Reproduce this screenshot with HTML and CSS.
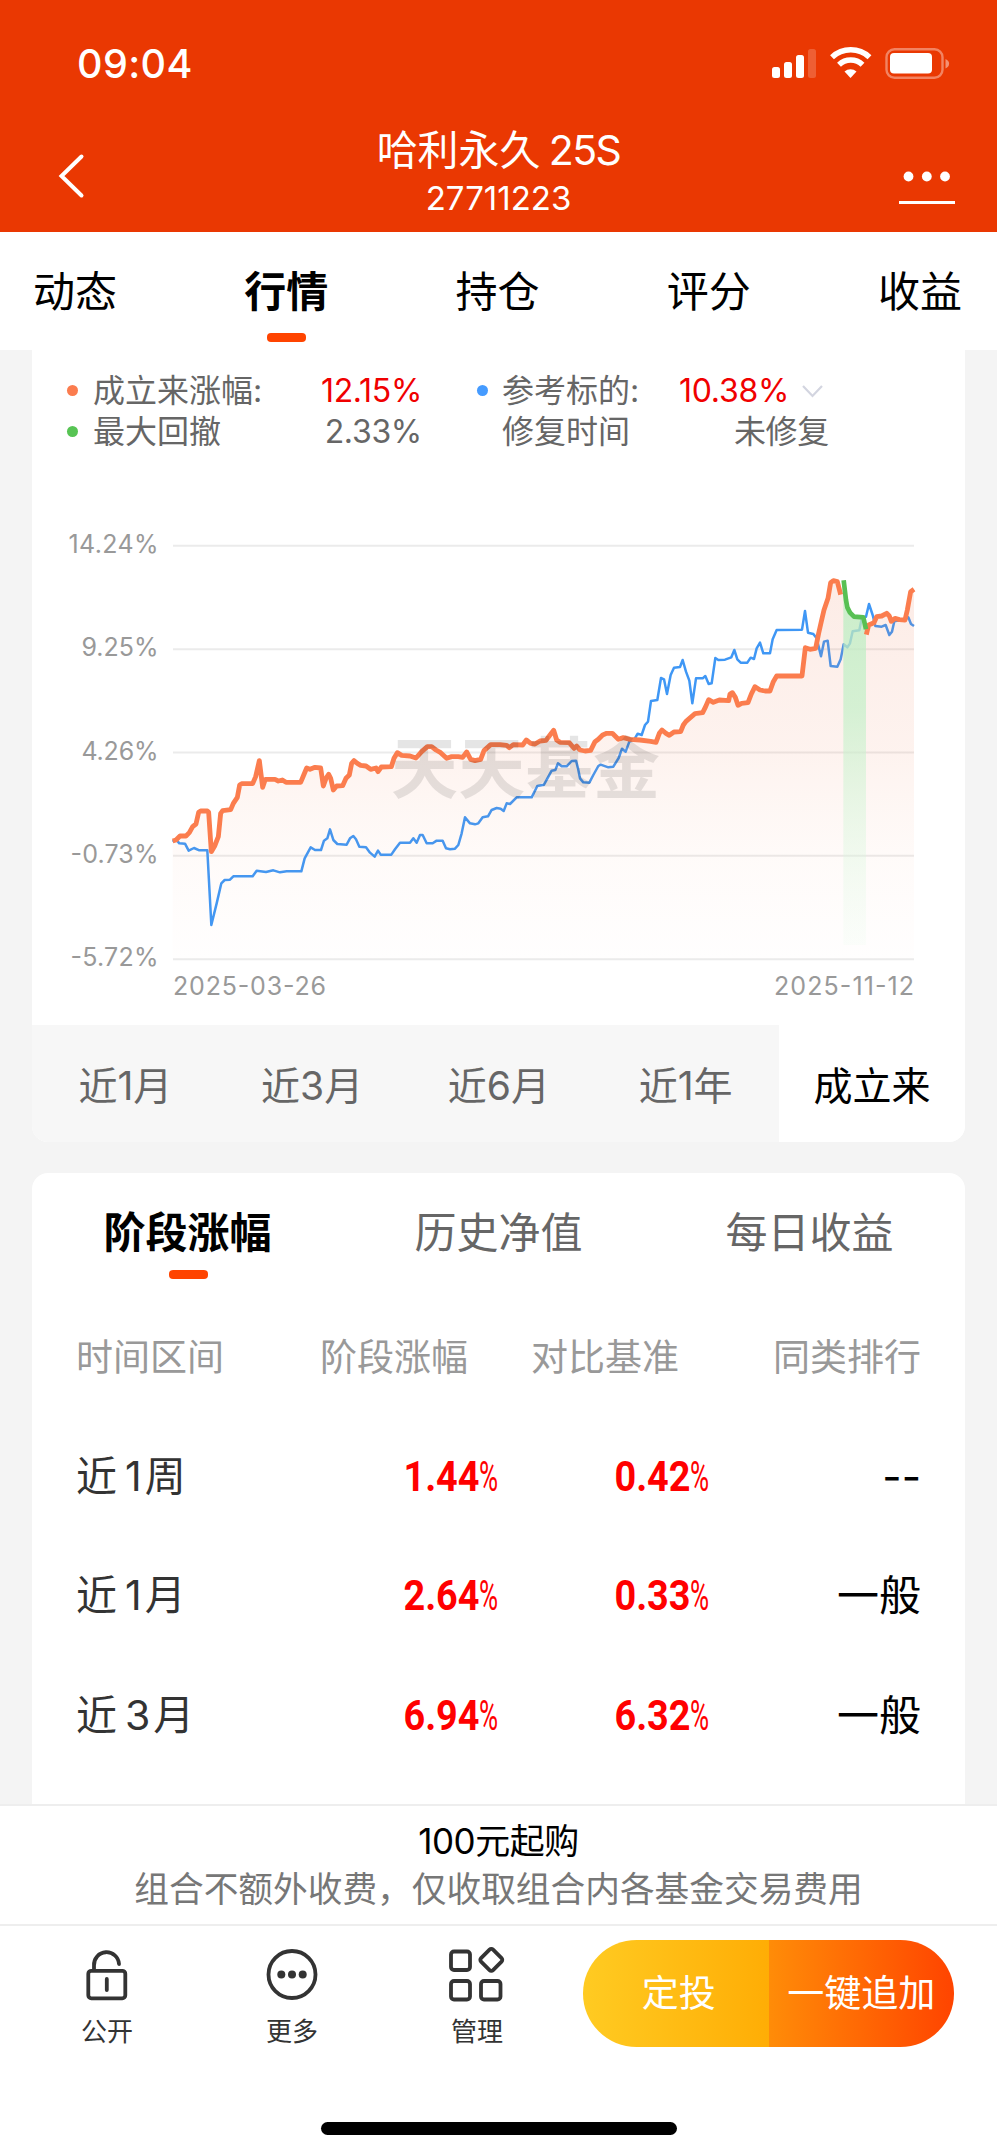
FILE: index.html
```html
<!DOCTYPE html>
<html lang="zh-CN">
<head>
<meta charset="utf-8">
<title>哈利永久 25S</title>
<link rel="stylesheet" href="styles.css">
</head>
<body>
<header class="head">
  <div class="status">
    <span class="clock">09:04</span>
    <svg class="sys" width="180" height="34" viewBox="0 0 180 34">
      <g fill="#fff"><rect x="2" y="21" width="8" height="11" rx="2.500"/><rect x="14" y="16" width="8" height="16" rx="2.500"/><rect x="26" y="9" width="8" height="23" rx="2.500"/><rect x="38" y="3" width="8" height="29" rx="2.500" opacity=".2"/></g>
      <g fill="none" stroke="#fff" stroke-width="5.600"><path d="M62 11.200a27.500 27.500 0 0 1 37.500 0"/><path d="M69 18.700a17 17 0 0 1 23.500 0"/></g>
      <path d="M80.500 32l-6-6.500a9 9 0 0 1 12 0z" fill="#fff"/>
      <rect x="116.500" y="3.200" width="56" height="28.500" rx="8" fill="none" stroke="#fff" stroke-opacity=".38" stroke-width="2.400"/>
      <rect x="120" y="7" width="42" height="20.500" rx="4" fill="#fff"/>
      <path d="M175.500 13v9.500q3.600-1.500 3.600-4.700t-3.600-4.800z" fill="#fff" opacity=".45"/>
    </svg>
  </div>
  <div class="nav">
    <svg class="back" width="30" height="50" viewBox="0 0 30 50"><path d="M25.500 5.500L5.500 25L25.500 44.500" fill="none" stroke="#fff" stroke-width="4" stroke-linecap="round"/></svg>
    <div class="titles"><div class="title">哈利永久<span>25S</span></div><div class="code">27711223</div></div>
    <svg class="dots" width="58" height="40" viewBox="0 0 58 40"><g fill="#fff"><circle cx="11.500" cy="8.500" r="4.900"/><circle cx="29.800" cy="8.500" r="4.900"/><circle cx="48" cy="8.500" r="4.900"/><rect x="2" y="33" width="56" height="3"/></g></svg>
  </div>
</header>
<nav class="tabs"><span>动态</span><span class="on">行情</span><span>持仓</span><span>评分</span><span>收益</span></nav>
<main class="body">
  <section class="card chartcard">
    <div class="legend">
      <i class="dot o"></i><span>成立来涨幅:</span><b class="red">12.15%</b>
      <i class="dot b"></i><span>参考标的:</span><b class="red pick">10.38%<svg width="23" height="14" viewBox="0 0 23 14"><path d="M2 2l9.500 10L21 2" fill="none" stroke="#d3d5e0" stroke-width="2.200"/></svg></b>
      <i class="dot g"></i><span>最大回撤</span><b>2.33%</b>
      <i></i><span>修复时间</span><b>未修复</b>
    </div>
    <svg class="chart" width="933" height="505" viewBox="32 520 933 505">
      <defs>
        <linearGradient id="fo" gradientUnits="userSpaceOnUse" x1="0" y1="60" x2="0" y2="1200"><stop offset="0" stop-color="#e8693f" stop-opacity=".13"/><stop offset=".45" stop-color="#f07548" stop-opacity=".09"/><stop offset=".75" stop-color="#f58a5c" stop-opacity=".035"/><stop offset="1" stop-color="#fa9a80" stop-opacity=".01"/></linearGradient>
        <linearGradient id="fg" gradientUnits="userSpaceOnUse" x1="0" y1="60" x2="0" y2="1155"><stop offset="0" stop-color="#b9edc0" stop-opacity=".75"/><stop offset=".35" stop-color="#c3f0c8" stop-opacity=".7"/><stop offset="1" stop-color="#e4fbe8" stop-opacity=".15"/></linearGradient>
      </defs>
      <g stroke="#ebebeb" stroke-width="2"><path d="M173 545.800H914M173 649.200H914M173 752.600H914M173 855.800H914M173 959.300H914"/></g>
      <g transform="translate(150 560) scale(.33333)" fill="none" stroke-linejoin="round">
        <path stroke="#3f97f5" stroke-width="7.500" d="M68,845L78,838 88,850 105,851 116,872 132,864 148,871 172,871 184,1095 200,1030 214,970 224,960 240,959 250,949 308,949 320,932 348,936 370,931 390,937 410,934 454,934 464,895 482,862 495,870 513,870 522,842 532,835 540,808 550,840 562,852 590,854 600,835 610,828 618,838 628,860 648,862 660,878 674,890 684,872 692,884 724,884 735,868 750,848 780,848 790,835 800,848 810,825 818,825 830,850 848,850 860,842 878,842 888,865 900,868 915,866 925,855 935,820 945,772 960,790 975,793 985,790 998,772 1014,769 1025,750 1040,744 1052,746 1061,753 1070,730 1080,732 1100,712 1145,712 1162,678 1182,674 1205,632 1216,630 1224,610 1235,619 1250,619 1265,603 1278,602 1284,625 1290,655 1300,667 1318,668 1330,645 1345,618 1352,614 1375,622 1390,620 1406,594 1416,566 1427,575 1438,545 1452,540 1463,521 1475,525 1485,495 1494,485 1503,423 1522,420 1533,354 1542,358 1551,402 1562,345 1572,323 1590,321 1598,300 1608,335 1618,362 1627,430 1638,355 1658,355 1666,348 1676,372 1685,370 1696,294 1705,300 1725,299 1744,292 1753,270 1762,298 1772,308 1792,308 1802,293 1812,297 1820,265 1830,248 1840,280 1860,280 1868,238 1880,210 1956,209 1965,153 1974,218 1990,222 2000,235 2013,289 2022,245 2033,242 2042,318 2062,320 2072,298 2081,253 2092,262 2100,250 2108,214 2128,211 2136,172 2148,170 2157,132 2168,165 2176,198 2195,200 2207,195 2218,225 2226,215 2233,184 2265,178 2275,172 2283,192 2292,198"/>
        <path fill="url(#fo)" d="M68,1198V843L78,840 90,828 108,828 118,818 128,800 138,792 146,757 152,753 172,753 176,757 184,875 194,858 205,830 212,760 218,752 242,749 250,730 262,712 269,675 275,671 308,671 317,650 328,602 338,682 346,658 375,658 408,667 452,667 470,624 512,624 520,678 536,643 550,690 578,677 598,645 612,602 632,616 662,628 684,635 694,621 724,620 742,578 798,594 832,560 890,594 938,592 950,576 962,598 992,598 1022,554 1118,555 1188,541 1211,511 1220,540 1258,548 1290,570 1322,571 1345,538 1370,520 1387,520 1405,538 1518,547 1536,510 1558,526 1592,515 1608,484 1658,458 1676,419 1736,422 1747,398 1764,436 1794,428 1815,380 1860,393 1880,348 1956,348 1966,263 1997,265 2015,180 2034,115 2042,68 2062,65 2072,102 2080,62 2092,142 2112,170 2140,172 2150,222 2156,195 2180,170 2210,160 2224,184 2265,180 2282,95 2292,88V1198z"/>
        <path fill="url(#fg)" d="M2080,1155V62L2088,120 2092,142 2100,158 2112,170 2140,172 2148,222V1155z"/>
        <path stroke="#fb7d4e" stroke-width="14.500" d="M68,843L78,840 90,828 108,828 118,818 128,800 138,792 146,757 152,753 172,753 176,757 184,875 194,858 205,830 212,760 218,752 242,749 250,730 262,712 269,675 275,671 308,671 317,650 328,602 338,682 346,658 375,658 385,663 397,660 408,667 452,667 460,648 470,624 480,628 495,622 512,624 520,678 528,655 536,643 542,655 550,690 560,678 578,677 588,655 598,645 605,610 612,602 622,610 632,616 648,618 662,628 678,624 684,635 694,621 724,620 732,595 742,578 755,586 780,588 798,594 815,575 832,560 845,560 858,570 872,578 890,595 905,590 925,590 938,592 950,576 962,598 975,602 992,598 1002,572 1012,563 1022,554 1050,554 1070,556 1078,563 1090,554 1118,555 1129,540 1142,550 1155,552 1170,543 1188,541 1200,525 1211,511 1220,540 1230,547 1258,548 1272,565 1280,558 1290,570 1305,573 1322,571 1335,545 1345,538 1358,525 1370,520 1387,520 1405,538 1420,533 1440,538 1470,540 1502,544 1518,547 1528,520 1536,510 1548,520 1558,526 1572,516 1592,515 1600,495 1608,484 1635,461 1658,458 1667,440 1676,419 1690,427 1708,420 1736,422 1740,402 1747,398 1756,412 1764,436 1775,430 1794,428 1804,402 1815,380 1830,390 1845,393 1860,393 1870,365 1880,348 1956,348 1966,263 1980,268 1997,265 2006,220 2015,180 2022,150 2034,115 2042,68 2050,62 2062,65 2072,104M2149,224L2156,195 2172,188 2180,170 2195,168 2210,160 2218,168 2224,184 2235,175 2248,179 2265,180 2272,150 2282,95 2292,88"/>
        <path stroke="#58c053" stroke-width="14" d="M2081,61L2088,120 2092,142 2100,158 2112,170 2140,172 2148,208"/>
      </g>
      <text class="mark" x="391" y="793" textLength="269">天天基金</text>
      <g class="axis" text-anchor="end"><text x="158.500" y="552.500" textLength="90">14.24%</text><text x="158.500" y="656" textLength="77">9.25%</text><text x="158.500" y="759.500" textLength="77">4.26%</text><text x="158.500" y="862.500" textLength="88">-0.73%</text><text x="158.500" y="966" textLength="88">-5.72%</text><text x="914" y="994.500" textLength="140">2025-11-12</text></g>
      <text class="axis" x="173" y="994.500" textLength="153">2025-03-26</text>
    </svg>
    <div class="range"><span>近1月</span><span>近3月</span><span>近6月</span><span>近1年</span><span class="on">成立来</span></div>
  </section>
  <section class="card tablecard">
    <div class="subtabs"><span class="on">阶段涨幅</span><span>历史净值</span><span>每日收益</span></div>
    <div class="row th"><span>时间区间</span><span>阶段涨幅</span><span>对比基准</span><span>同类排行</span></div>
    <div class="row"><span>近<em>1</em>周</span><span class="val"><b>1.44</b><i>%</i></span><span class="val"><b>0.42</b><i>%</i></span><span class="rank">--</span></div>
    <div class="row"><span>近<em>1</em>月</span><span class="val"><b>2.64</b><i>%</i></span><span class="val"><b>0.33</b><i>%</i></span><span class="rank">一般</span></div>
    <div class="row"><span>近<em>3</em>月</span><span class="val"><b>6.94</b><i>%</i></span><span class="val"><b>6.32</b><i>%</i></span><span class="rank">一般</span></div>
  </section>
</main>
<section class="notice"><div class="min">100元起购</div><div class="fee">组合不额外收费，仅收取组合内各基金交易费用</div></section>
<footer class="foot">
  <div class="actions">
    <div class="act"><svg width="60" height="60" viewBox="0 0 60 60"><g fill="none" stroke="#333" stroke-width="3.800" stroke-linecap="round"><rect x="11.300" y="25.800" width="37" height="27.500" rx="3"/><path d="M17 25V20.500a12.500 12.500 0 0 1 25-1.500M29.800 34v11"/></g></svg><span>公开</span></div>
    <div class="act"><svg width="60" height="60" viewBox="0 0 60 60"><circle cx="30" cy="29.500" r="23.500" fill="none" stroke="#333" stroke-width="3.800"/><g fill="#333"><circle cx="19.300" cy="29.500" r="4"/><circle cx="30" cy="29.500" r="4"/><circle cx="40.700" cy="29.500" r="4"/></g></svg><span>更多</span></div>
    <div class="act"><svg width="60" height="60" viewBox="0 0 60 60"><g fill="none" stroke="#333" stroke-width="3.800"><rect x="4" y="6.500" width="19" height="18.500" rx="3"/><rect x="4" y="36" width="19" height="18.500" rx="3"/><rect x="34" y="36" width="19.500" height="18.500" rx="3"/><rect x="35.800" y="6.300" width="17" height="17" rx="2.500" transform="rotate(45 44.300 14.800)"/></g></svg><span>管理</span></div>
  </div>
  <div class="cta"><span class="plan">定投</span><span class="add">一键追加</span></div>
</footer>
<div class="home"><i></i></div>
</body>
</html>
```
FILE: styles.css
```css
* { box-sizing: border-box; }
body { margin: 0; width: 997px; height: 2156px; overflow: hidden; background: #fff; display: flex; flex-direction: column; font-family: Inter, "Noto Sans CJK SC", sans-serif; color: #000; }
span, b, em, i { white-space: nowrap; }
em, i { font-style: normal; }
svg { display: block; flex: none; }
.head { height: 232px; flex: none; background: #ea3802; color: #fff; }
.status { height: 118px; padding: 46px 47px 0 77px; display: flex; justify-content: space-between; }
.clock { font-size: 39.500px; font-weight: 500; line-height: 36px; letter-spacing: .4px; }
.nav { height: 114px; padding: 0 42px 0 56px; display: flex; justify-content: space-between; }
.back { margin-top: 33px; }
.titles { text-align: center; margin-left: 14px; }
.title { font-size: 41px; line-height: 64px; height: 57px; }
.title span { margin-left: 8px; letter-spacing: -1.500px; }
.code { font-size: 33px; line-height: 46px; letter-spacing: 0; }
.dots { margin-top: 50px; }
.tabs { height: 118px; flex: none; display: flex; justify-content: space-between; padding: 0 35px 0 33px; font-size: 42px; line-height: 120px; }
.on { position: relative; font-weight: 700; }
.tabs .on::after, .subtabs .on::after { content: ""; position: absolute; left: 50%; margin-left: -19px; width: 39px; height: 9px; border-radius: 4px; background: #ff4400; }
.tabs .on::after { top: 101px; }
.body { height: 1454px; flex: none; background: #f4f4f4; padding: 0 32px; overflow: hidden; }
.card { background: #fff; overflow: hidden; }
.chartcard { height: 792px; border-radius: 0 0 16px 16px; }
.legend { height: 170px; padding: 20px 0 0 35px; display: grid; grid-template-columns: 26px 170px 159px 80px 150px 177px; grid-template-rows: 41px 41px; align-items: center; font-size: 32px; line-height: 41px; color: #666; }
.legend b { font-weight: 400; justify-self: end; letter-spacing: -.300px; }
.legend .pick { display: flex; align-items: center; gap: 12px; margin-right: 5px; }
.dot { width: 11px; height: 11px; border-radius: 50%; }
.o { background: #fb7c4e; }
.b { background: #459bff; justify-self: end; margin-right: 14px; }
.g { background: #57c454; }
.legend .red { color: #f00000; }
.range { height: 117px; display: grid; grid-template-columns: repeat(4, 186.750px) 1fr; background: #f7f7f7; font-size: 39px; line-height: 121px; text-align: center; color: #666; }
.range .on { background: #fff; color: #000; font-weight: 400; }
.axis { font-size: 25px; fill: #999; }
.mark { font-family: "Noto Sans CJK SC", sans-serif; font-size: 67px; font-weight: 700; fill: #000; fill-opacity: .1; }
.tablecard { margin-top: 31px; height: 640px; border-radius: 16px 16px 0 0; }
.subtabs { display: grid; grid-template-columns: repeat(3, 1fr); height: 124px; line-height: 120px; font-size: 42px; text-align: center; color: #666; }
.subtabs .on { color: #000; }
.subtabs .on::after { top: 97px; }
.row { height: 119.500px; line-height: 119.500px; padding: 0 44px; display: grid; grid-template-columns: 180px 241px 211px 1fr; font-size: 41px; color: #333; }
.row > span:nth-child(n+2) { text-align: right; }
.row.th { font-size: 37px; line-height: 121px; color: #999; }
.row.th > span:nth-child(2), .row.th > span:nth-child(3) { padding-right: 29px; }
.row em { margin: 0 3px 0 8px; }
.val { font-family: Roboto, sans-serif; color: #f00; display: flex; justify-content: flex-end; }
.val b { font-size: 42px; font-weight: 700; transform: scaleX(.9); transform-origin: right; }
.val i { font-size: 42px; width: 18px; transform: scaleX(.62); transform-origin: left; }
.row .rank { color: #000; font-size: 42px; }
.notice { height: 120px; flex: none; border-top: 2px solid #eee; text-align: center; padding-top: 11px; }
.min { font-size: 35px; line-height: 48px; letter-spacing: -.500px; }
.fee { font-size: 34.700px; line-height: 48px; color: #777; }
.foot { height: 176px; flex: none; border-top: 2px solid #eee; padding: 14px 43px 0 77px; display: flex; justify-content: space-between; }
.actions { display: flex; gap: 125px; padding-top: 5px; }
.act { width: 60px; display: flex; flex-direction: column; align-items: center; font-size: 26px; line-height: 36px; gap: 9px; color: #333; }
.cta { width: 371px; height: 107px; border-radius: 54px; overflow: hidden; display: grid; grid-template-columns: 1fr 1fr; text-align: center; color: #fff; font-size: 37px; line-height: 108px; }
.plan { background: linear-gradient(90deg, #ffcb22, #ffad05); padding-left: 6px; }
.add { background: linear-gradient(90deg, #ff8c08, #ff4400); }
.home { padding-top: 22px; display: flex; justify-content: center; }
.home i { width: 356px; height: 13px; border-radius: 7px; background: #000; }
```
